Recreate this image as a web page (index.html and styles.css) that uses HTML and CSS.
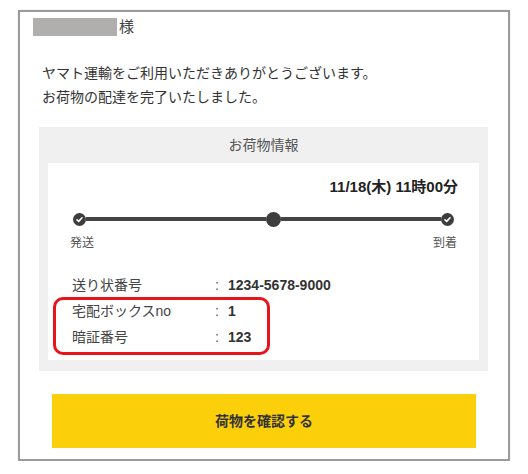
FILE: index.html
```html
<!DOCTYPE html>
<html lang="ja">
<head>
<meta charset="utf-8">
<title>お荷物情報</title>
<link rel="stylesheet" href="styles.css">
</head>
<body>
<div class="frame">
  <div class="name-row"><span class="name-mask"></span><span class="sama">様</span></div>
  <p class="greeting">ヤマト運輸をご利用いただきありがとうございます。<br>お荷物の配達を完了いたしました。</p>
  <section class="panel">
    <h2 class="panel-title">お荷物情報</h2>
    <div class="card">
      <div class="date">11/18(木) 11時00分</div>
      <div class="progress">
        <span class="dot check"><svg viewBox="0 0 13 13" width="13" height="13"><path d="M4 6.8 L5.7 8.4 L9 4.8" fill="none" stroke="#fff" stroke-width="1.6" stroke-linecap="round" stroke-linejoin="round"/></svg></span>
        <span class="track track-a"></span>
        <span class="dot mid"></span>
        <span class="track track-b"></span>
        <span class="dot check"><svg viewBox="0 0 13 13" width="13" height="13"><path d="M4 6.8 L5.7 8.4 L9 4.8" fill="none" stroke="#fff" stroke-width="1.6" stroke-linecap="round" stroke-linejoin="round"/></svg></span>
      </div>
      <div class="labels"><span>発送</span><span>到着</span></div>
      <div class="rows">
        <div class="row"><span class="key">送り状番号</span><span class="colon">:</span><span class="val">1234-5678-9000</span></div>
        <div class="group">
          <div class="row"><span class="key">宅配ボックスno</span><span class="colon">:</span><span class="val">1</span></div>
          <div class="row"><span class="key">暗証番号</span><span class="colon">:</span><span class="val">123</span></div>
        </div>
      </div>
    </div>
  </section>
  <div class="btn">荷物を確認する</div>
</div>
</body>
</html>
```
FILE: styles.css
```css
html, body { margin: 0; padding: 0; background: #fff; }
body {
  font-family: "Liberation Sans", "Noto Sans CJK JP", sans-serif;
  color: #333;
}
.frame {
  box-sizing: border-box;
  width: 492px;
  margin: 10px 0 0 18px;
  border: 2px solid #9b9b9b;
  padding: 6px 0 11px;
  box-shadow: 0 0 1px rgba(0,0,0,0.25);
}
.name-row {
  display: flex;
  align-items: center;
  height: 18px;
  padding-left: 13px;
}
.name-mask {
  display: block;
  width: 84px;
  height: 18px;
  background: #b1aeae;
}
.sama {
  margin-left: 2px;
  font-size: 15px;
  line-height: 18px;
  color: #444;
}
.greeting {
  margin: 25px 0 18px 22px;
  font-size: 14px;
  line-height: 24px;
  color: #333;
}
.panel {
  margin: 0 20px 0 19px;
  background: #f0f0f0;
  padding: 0 9px 11px;
}
.panel-title {
  margin: 0;
  height: 36px;
  line-height: 36px;
  font-size: 14px;
  font-weight: normal;
  text-align: center;
  color: #555;
}
.card {
  background: #fff;
  padding: 14px 0 10px;
}
.date {
  text-align: right;
  padding-right: 21px;
  font-size: 15px;
  font-weight: bold;
  line-height: 20px;
  color: #222;
}
.progress {
  display: flex;
  align-items: center;
  height: 16px;
  margin: 14px 25px 0;
}
.dot {
  flex: none;
  display: block;
  border-radius: 50%;
  background: #3d3d3d;
}
.dot.check { width: 13px; height: 13px; }
.dot.check svg { display: block; }
.dot.mid { width: 15px; height: 15px; }
.track {
  display: block;
  height: 4px;
  background: #444;
}
.track-a { flex: 187 1 0; }
.track-b { flex: 166 1 0; }
.labels {
  display: flex;
  justify-content: space-between;
  margin: 8px 22px 0;
  font-size: 12px;
  line-height: 16px;
  color: #555;
}
.rows {
  margin-top: 21px;
  padding-left: 24px;
}
.row {
  display: flex;
  height: 26px;
  line-height: 26px;
  font-size: 14px;
  color: #444;
}
.key { width: 143px; }
.colon { width: 13px; color: #555; }
.val { font-weight: bold; color: #333; }
.group { position: relative; }
.group::after {
  content: "";
  position: absolute;
  left: -19px;
  top: -1px;
  width: 217px;
  height: 58px;
  box-sizing: border-box;
  border: 3px solid #e8141c;
  border-radius: 10px;
}
.btn {
  margin: 23px 32px 0;
  height: 54px;
  line-height: 54px;
  background: #fccf0b;
  text-align: center;
  font-size: 14px;
  font-weight: bold;
  color: #333;
}
```
